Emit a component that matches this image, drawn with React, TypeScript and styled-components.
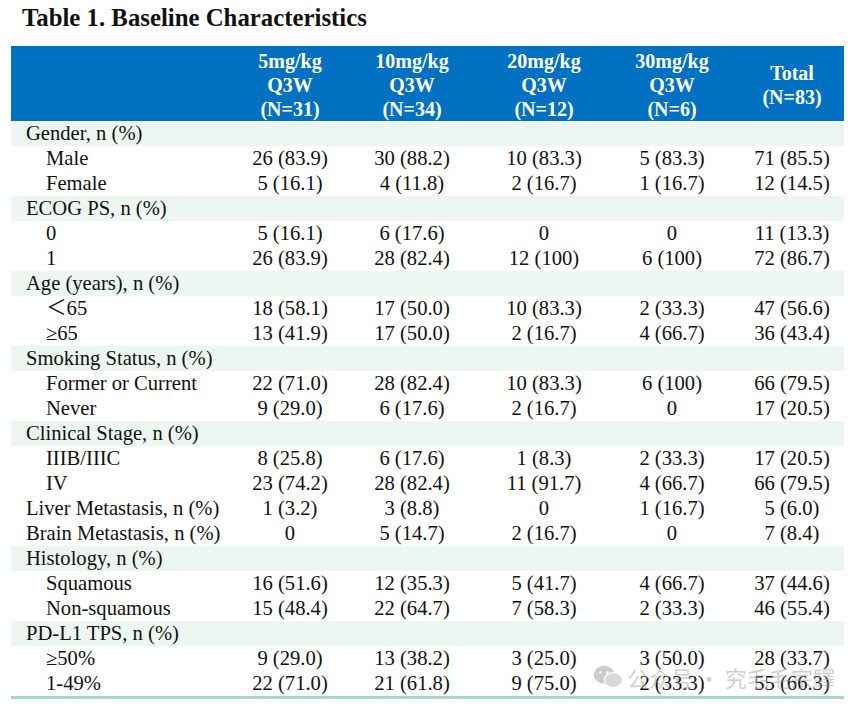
import React from "react";
import styled, { createGlobalStyle } from "styled-components";

const GlobalStyle = createGlobalStyle`
  html, body {
    margin: 0;
    padding: 0;
    background: #ffffff;
  }
  body {
    font-family: "Liberation Serif", "Times New Roman", "Noto Sans CJK SC", serif;
    color: #111111;
  }
`;

type Row = {
  label: string;
  values?: string[];
  kind: "group" | "item" | "single";
};

const rows: Row[] = [
  { label: "Gender, n (%)", kind: "group" },
  { label: "Male", kind: "item", values: ["26 (83.9)", "30 (88.2)", "10 (83.3)", "5 (83.3)", "71 (85.5)"] },
  { label: "Female", kind: "item", values: ["5 (16.1)", "4 (11.8)", "2 (16.7)", "1 (16.7)", "12 (14.5)"] },
  { label: "ECOG PS, n (%)", kind: "group" },
  { label: "0", kind: "item", values: ["5 (16.1)", "6 (17.6)", "0", "0", "11 (13.3)"] },
  { label: "1", kind: "item", values: ["26 (83.9)", "28 (82.4)", "12 (100)", "6 (100)", "72 (86.7)"] },
  { label: "Age (years), n (%)", kind: "group" },
  { label: "＜65", kind: "item", values: ["18 (58.1)", "17 (50.0)", "10 (83.3)", "2 (33.3)", "47 (56.6)"] },
  { label: "≥65", kind: "item", values: ["13 (41.9)", "17 (50.0)", "2 (16.7)", "4 (66.7)", "36 (43.4)"] },
  { label: "Smoking Status, n (%)", kind: "group" },
  { label: "Former or Current", kind: "item", values: ["22 (71.0)", "28 (82.4)", "10 (83.3)", "6 (100)", "66 (79.5)"] },
  { label: "Never", kind: "item", values: ["9 (29.0)", "6 (17.6)", "2 (16.7)", "0", "17 (20.5)"] },
  { label: "Clinical Stage, n (%)", kind: "group" },
  { label: "IIIB/IIIC", kind: "item", values: ["8 (25.8)", "6 (17.6)", "1 (8.3)", "2 (33.3)", "17 (20.5)"] },
  { label: "IV", kind: "item", values: ["23 (74.2)", "28 (82.4)", "11 (91.7)", "4 (66.7)", "66 (79.5)"] },
  { label: "Liver Metastasis, n (%)", kind: "single", values: ["1 (3.2)", "3 (8.8)", "0", "1 (16.7)", "5 (6.0)"] },
  { label: "Brain Metastasis, n (%)", kind: "single", values: ["0", "5 (14.7)", "2 (16.7)", "0", "7 (8.4)"] },
  { label: "Histology, n (%)", kind: "group" },
  { label: "Squamous", kind: "item", values: ["16 (51.6)", "12 (35.3)", "5 (41.7)", "4 (66.7)", "37 (44.6)"] },
  { label: "Non-squamous", kind: "item", values: ["15 (48.4)", "22 (64.7)", "7 (58.3)", "2 (33.3)", "46 (55.4)"] },
  { label: "PD-L1 TPS, n (%)", kind: "group" },
  { label: "≥50%", kind: "item", values: ["9 (29.0)", "13 (38.2)", "3 (25.0)", "3 (50.0)", "28 (33.7)"] },
  { label: "1-49%", kind: "item", values: ["22 (71.0)", "21 (61.8)", "9 (75.0)", "2 (33.3)", "55 (66.3)"] },
];

const headers: string[][] = [
  ["5mg/kg", "Q3W", "(N=31)"],
  ["10mg/kg", "Q3W", "(N=34)"],
  ["20mg/kg", "Q3W", "(N=12)"],
  ["30mg/kg", "Q3W", "(N=6)"],
  ["Total", "(N=83)"],
];

const COLUMNS = "229px 100px 144px 120px 136px 104px";

const App = () => {
  return (
    <Page>
      <GlobalStyle />
      <Title>Table 1. Baseline Characteristics</Title>
      <Table>
        <HeaderRow>
          <HeaderCell />
          {headers.map((lines, i) => (
            <HeaderCell key={i}>
              {lines.map((line) => (
                <span key={line}>{line}</span>
              ))}
            </HeaderCell>
          ))}
        </HeaderRow>
        {rows.map((row) => (
          <BodyRow key={row.label} $shaded={row.kind === "group"}>
            <LabelCell $indent={row.kind === "item"}>{row.label}</LabelCell>
            {row.values
              ? row.values.map((v, i) => <ValueCell key={i}>{v}</ValueCell>)
              : null}
          </BodyRow>
        ))}
        <Watermark>
          <WeChatIcon viewBox="0 0 40 34">
            <ellipse cx="15" cy="14" rx="14" ry="12" fill="#9a9a9a" />
            <ellipse cx="27" cy="21" rx="12" ry="10" fill="#b5b5b5" stroke="#ffffff" strokeWidth="1.5" />
            <circle cx="10" cy="11" r="1.8" fill="#ffffff" />
            <circle cx="19" cy="11" r="1.8" fill="#ffffff" />
          </WeChatIcon>
          <span>公众号 · 究毛毛宗驛</span>
        </Watermark>
      </Table>
    </Page>
  );
};

const Page = styled.div`
  width: 861px;
  height: 707px;
  padding: 4px 17px 0 11px;
  box-sizing: border-box;
  overflow: hidden;
`;

const Title = styled.h1`
  margin: 0 0 14px 11px;
  font-size: 24.8px;
  line-height: 28px;
  font-weight: 700;
  color: #111111;
`;

const Table = styled.div`
  position: relative;
  display: flex;
  flex-direction: column;
  width: 833px;
  border-bottom: 3px solid #a9d6c6;
`;

const HeaderRow = styled.div`
  display: grid;
  grid-template-columns: ${COLUMNS};
  height: 75px;
  background: #0070c0;
`;

const HeaderCell = styled.div`
  display: flex;
  flex-direction: column;
  justify-content: center;
  align-items: center;
  color: #ffffff;
  font-weight: 700;
  font-size: 20px;
  line-height: 24px;
  padding-top: 2px;
`;

const BodyRow = styled.div<{ $shaded: boolean }>`
  display: grid;
  grid-template-columns: ${COLUMNS};
  height: 25px;
  align-items: center;
  background: ${({ $shaded }) => ($shaded ? "#ebf7f0" : "#ffffff")};
  font-size: 20.6px;
  line-height: 25px;
`;

const LabelCell = styled.div<{ $indent: boolean }>`
  padding-left: ${({ $indent }) => ($indent ? "35px" : "15px")};
  white-space: nowrap;
`;

const ValueCell = styled.div`
  text-align: center;
  white-space: nowrap;
`;

const Watermark = styled.div`
  position: absolute;
  left: 582px;
  bottom: 3px;
  display: flex;
  align-items: center;
  gap: 4px;
  font-family: "Noto Sans CJK SC", sans-serif;
  font-size: 22px;
  color: rgba(160, 160, 160, 0.5);
  pointer-events: none;
  white-space: nowrap;
`;

const WeChatIcon = styled.svg`
  width: 30px;
  height: 26px;
  opacity: 0.5;
`;

export default App;
